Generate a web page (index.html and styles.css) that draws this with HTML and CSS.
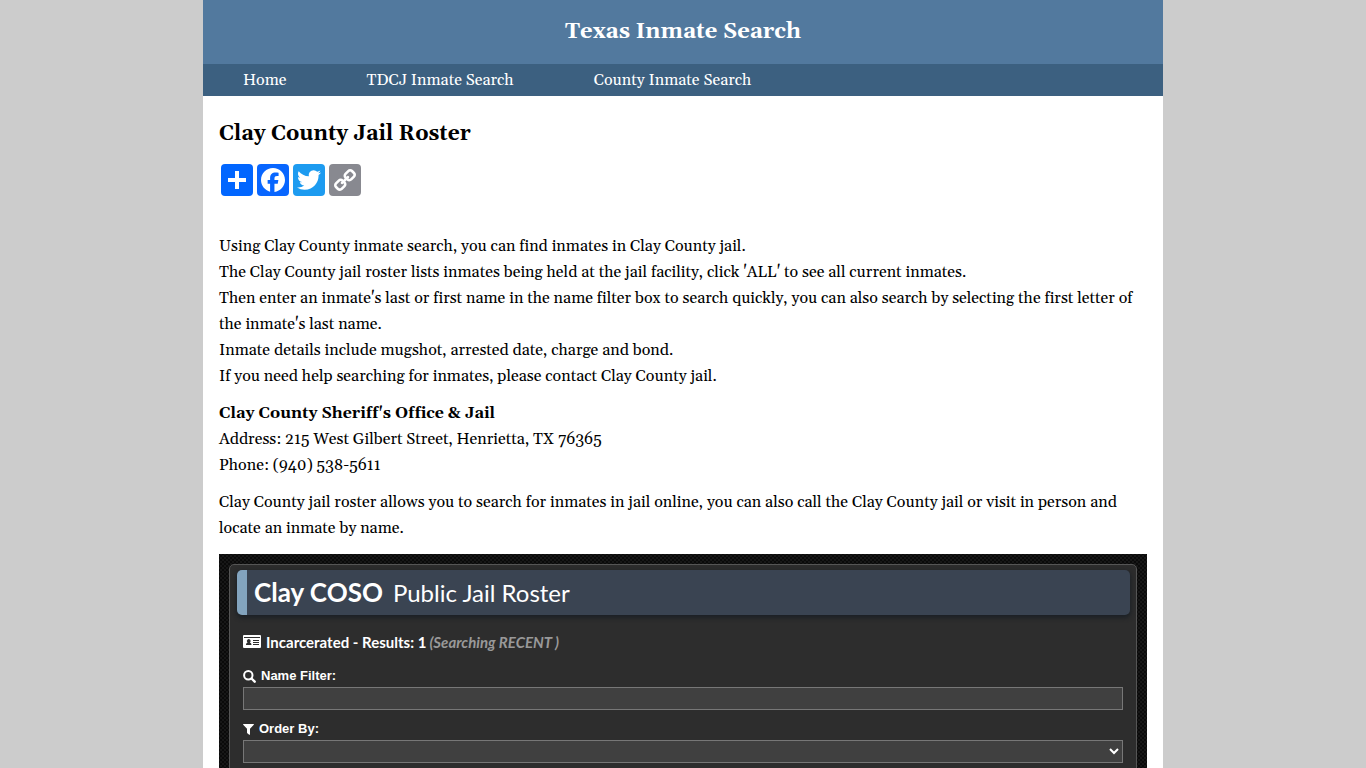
FILE: index.html
```html
<!DOCTYPE html>
<html lang="en">
<head>
    <meta charset="UTF-8">
    <meta name="viewport" content="width=device-width, initial-scale=1.0">
    <title>Clay County Jail Roster</title>
    <link rel="stylesheet" href="styles.css">
</head>
<body>
    <div class="wrapper">
        <header class="header">Texas Inmate Search</header>
        <nav class="nav">
            <a href="#">Home</a>
            <a href="#">TDCJ Inmate Search</a>
            <a href="#">County Inmate Search</a>
        </nav>
        <main class="content">
            <h1>Clay County Jail Roster</h1>
            <div class="share">
                <a class="share-any" href="#" aria-label="Share">
                    <svg viewBox="0 0 32 32"><path fill="#fff" d="M14 7h4v18h-4z"/><path fill="#fff" d="M7 14h18v4H7z"/></svg>
                </a>
                <a class="share-facebook" href="#" aria-label="Facebook">
                    <svg viewBox="0 0 32 32"><path fill="#fff" d="M28 16c0-6.627-5.373-12-12-12S4 9.373 4 16c0 5.628 3.875 10.35 9.101 11.647v-7.98h-2.474V16H13.1v-1.58c0-4.085 1.849-5.978 5.859-5.978.76 0 2.072.15 2.608.298v3.325c-.283-.03-.775-.045-1.386-.045-1.967 0-2.728.745-2.728 2.683V16h3.92l-.673 3.667h-3.247v8.245C23.395 27.195 28 22.135 28 16"/></svg>
                </a>
                <a class="share-twitter" href="#" aria-label="Twitter">
                    <svg viewBox="0 0 32 32"><path fill="#fff" d="M28 8.557a10 10 0 0 1-2.828.775 4.93 4.93 0 0 0 2.166-2.725 9.7 9.7 0 0 1-3.13 1.194 4.92 4.92 0 0 0-3.593-1.55 4.924 4.924 0 0 0-4.794 6.049c-4.09-.21-7.72-2.17-10.15-5.15a4.94 4.94 0 0 0-.665 2.477c0 1.71.87 3.214 2.19 4.1a5 5 0 0 1-2.23-.616v.06c0 2.39 1.7 4.38 3.952 4.83-.414.115-.85.174-1.297.174q-.476-.001-.928-.088a4.935 4.935 0 0 0 4.6 3.42 9.9 9.9 0 0 1-6.115 2.107q-.6 0-1.175-.067a13.95 13.95 0 0 0 7.55 2.213c9.056 0 14.01-7.507 14.01-14.013q0-.32-.015-.637c.96-.695 1.795-1.56 2.455-2.55z"/></svg>
                </a>
                <a class="share-link" href="#" aria-label="Copy link">
                    <svg viewBox="0 0 32 32"><path fill="#fff" d="M7.591 21.177q0-.54.377-.917l2.804-2.804a1.24 1.24 0 0 1 .913-.378q.565.001.97.43-.038.04-.246.24-.207.2-.278.277a3 3 0 0 0-.193.252 1.1 1.1 0 0 0-.17.33q-.045.163-.045.35 0 .54.377.917a1.25 1.25 0 0 0 .918.377q.186 0 .351-.045a1.1 1.1 0 0 0 .33-.17q.155-.115.252-.194.078-.07.278-.279.2-.206.24-.243.434.41.434.977 0 .54-.378.914l-2.778 2.793a1.25 1.25 0 0 1-.917.363q-.54.001-.917-.35l-1.982-1.97a1.22 1.22 0 0 1-.378-.9zm9.477-9.504q0-.54.377-.917l2.777-2.79a1.24 1.24 0 0 1 .913-.378q.525 0 .917.364l1.984 1.968q.38.378.38.903 0 .54-.377.917l-2.804 2.804a1.24 1.24 0 0 1-.916.364q-.565.001-.97-.416.038-.04.246-.24.21-.2.28-.277.12-.145.195-.252a1.1 1.1 0 0 0 .17-.33q.045-.163.045-.35 0-.54-.378-.917a1.25 1.25 0 0 0-.918-.377q-.186 0-.35.045a1.1 1.1 0 0 0-.33.17q-.155.115-.252.194-.078.07-.279.279-.2.206-.24.243-.434-.41-.434-.977zM5 21.177q0 1.62 1.148 2.744l1.982 1.97Q9.253 27.01 10.87 27q1.63-.001 2.75-1.144l2.777-2.793q1.118-1.123 1.118-2.74 0-1.66-1.183-2.818l1.186-1.185q1.16 1.185 2.805 1.186 1.62 0 2.75-1.134l2.803-2.803q1.133-1.137 1.133-2.754 0-1.62-1.146-2.744l-1.982-1.967Q22.757 4.99 21.14 5q-1.63.001-2.75 1.144l-2.777 2.793q-1.118 1.123-1.118 2.74 0 1.66 1.183 2.818l-1.186 1.185q-1.16-1.185-2.805-1.186-1.62 0-2.75 1.134L6.134 18.43Q5.001 19.562 5 21.177"/></svg>
                </a>
            </div>
            <p>
                Using Clay County inmate search, you can find inmates in Clay County jail.<br>
                The Clay County jail roster lists inmates being held at the jail facility, click 'ALL' to see all current inmates.<br>
                Then enter an inmate's last or first name in the name filter box to search quickly, you can also search by selecting the first letter of the inmate's last name.<br>
                Inmate details include mugshot, arrested date, charge and bond.<br>
                If you need help searching for inmates, please contact Clay County jail.
            </p>
            <p>
                <strong>Clay County Sheriff's Office &amp; Jail</strong><br>
                Address: 215 West Gilbert Street, Henrietta, TX 76365<br>
                Phone: (940) 538-5611
            </p>
            <p>Clay County jail roster allows you to search for inmates in jail online, you can also call the Clay County jail or visit in person and locate an inmate by name.</p>

            <section class="roster">
                <div class="panel">
                    <h2 class="banner"><b>Clay COSO</b> <span>Public Jail Roster</span></h2>
                    <form class="filters">
                        <div class="results">
                            <svg width="18" height="14" viewBox="0 0 18 14"><path fill="#fff" fill-rule="evenodd" d="M1 0h16a1 1 0 0 1 1 1v11a1 1 0 0 1-1 1H1a1 1 0 0 1-1-1V1a1 1 0 0 1 1-1zM1 2v1h16V2zM3 10h5.500c0-1.800-.8-2.400-1.700-2.600a1.800 1.800 0 1 0-2.100 0C3.800 7.600 3 8.200 3 10zM10 5v1h6V5zM10 7v1h6V7zM10 9v1h6V9z"/></svg>
                            <b>Incarcerated - Results: 1</b>
                            <i>(Searching RECENT )</i>
                        </div>
                        <label for="name-filter">
                            <svg width="13" height="13" viewBox="0 0 13 13"><circle cx="5.300" cy="5.300" r="4.200" fill="none" stroke="#fff" stroke-width="2"/><path d="M8.500 8.500l3.200 3.200" stroke="#fff" stroke-width="2.400" stroke-linecap="round"/></svg>
                            Name Filter:
                        </label>
                        <input type="text" id="name-filter">
                        <label for="order-by">
                            <svg width="11" height="11" viewBox="0 0 11 11"><path fill="#fff" d="M.5 0h10c.5 0 .6.500.3.800L7 4.700v5.600c0 .6-.4.700-.8.400L4.300 9.200A.8.800 0 0 1 4 8.500V4.700L.2.800C-.1.500 0 0 .5 0z"/></svg>
                            Order By:
                        </label>
                        <select id="order-by"></select>
                    </form>
                </div>
            </section>
        </main>
    </div>
</body>
</html>
```
FILE: styles.css
```css
body {
    margin: 0;
    background: #ccc;
    color: #000;
    font-family: Georgia, Gelasio, "Liberation Serif", serif;
    font-size: 16px;
    font-variant-ligatures: none;
    line-height: 26px;
}
.wrapper {
    max-width: 960px;
    min-height: 100vh;
    margin: 0 auto;
    background: #fff;
}
.header {
    padding: 16px;
    background: #52799e;
    color: #fff;
    font-size: 22px;
    font-weight: bold;
    line-height: 32px;
    text-align: center;
}
.nav {
    display: flex;
    flex-wrap: wrap;
    background: #3c6080;
}
.nav a {
    padding: 0 40px;
    color: #fff;
    line-height: 32px;
    text-decoration: none;
}
.content {
    padding: 20px 16px;
}
h1 {
    margin: 0 0 12px;
    font-size: 21px;
    line-height: 36px;
}
.share {
    display: flex;
    gap: 4px;
    padding: 0 2px;
    margin-bottom: 37px;
}
.share a {
    width: 32px;
    height: 32px;
    border-radius: 4px;
    background: #0166ff;
}
.share svg {
    display: block;
}
.share .share-facebook {
    background: #0866ff;
}
.share .share-twitter {
    background: #1d9bf0;
}
.share .share-link {
    background: #888990;
}
p {
    margin: 0 0 11px;
}

/* roster box */
.roster {
    margin-top: 13px;
    padding: 10px;
    background-color: #171717;
    background-image: radial-gradient(#0a0a0a 1px, transparent 1px), radial-gradient(#0a0a0a 1px, transparent 1px);
    background-position: 0 0, 2px 2px;
    background-size: 4px 4px;
    color: #fff;
    font-family: Lato, sans-serif;
}
.panel {
    padding: 5px 6px 12px 7px;
    border: 1px solid #555;
    border-radius: 5px;
    background: #2d2d2d;
}
.banner {
    display: flex;
    align-items: baseline;
    gap: 10px;
    margin: 0;
    padding-left: 7px;
    border-left: 10px solid #83a4be;
    border-radius: 5px;
    background: #3a4452;
    box-shadow: 0 2px 4px 1px #1c2126;
    font-size: 24px;
    font-weight: normal;
    line-height: 44px;
}
.banner b {
    font-size: 26px;
}
.filters {
    display: flex;
    flex-direction: column;
    padding: 14px 7px 0 6px;
}
.results {
    display: flex;
    align-items: center;
    font-size: 15px;
    margin-bottom: 10px;
}
.results b {
    margin: 0 3px 0 5px;
}
.results i {
    color: #999;
    font-weight: bold;
}
.filters label {
    display: flex;
    align-items: center;
    gap: 5px;
    font: bold 13px/22px "Liberation Sans", Arial, sans-serif;
}
.filters input,
.filters select {
    box-sizing: border-box;
    width: 100%;
    height: 23px;
    margin: 0 0 8px;
    border: 1px solid #777;
    border-radius: 0;
    background-color: #404040;
    color: #fff;
}
```
